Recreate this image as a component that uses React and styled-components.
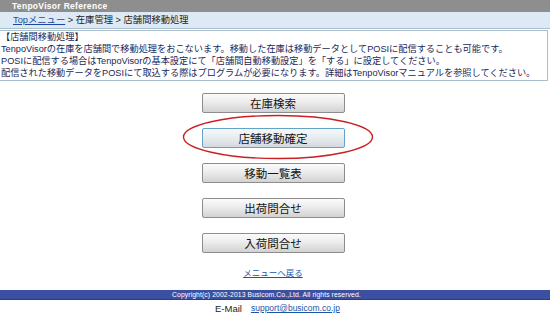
import React from 'react';
import styled, { createGlobalStyle, css } from 'styled-components';

const GlobalStyle = createGlobalStyle`
  body {
    margin: 0;
    background: #ffffff;
    font-family: "Liberation Sans", "Noto Sans CJK JP", sans-serif;
  }
`;

const Page = styled.div`
  width: 550px;
  height: 317px;
  overflow: hidden;
`;

const TitleBar = styled.div`
  height: 12px;
  line-height: 12px;
  padding-left: 12px;
  background: #8f8e8e;
  color: #ffffff;
  font-size: 8.5px;
  font-weight: 700;
  letter-spacing: 0.3px;
`;

const Crumbs = styled.div`
  height: 16px;
  line-height: 16px;
  padding-left: 13px;
  background: #dde9f4;
  border-bottom: 1px solid #a9bfcb;
  color: #1d1d1d;
  font-size: 9.3px;
`;

const CrumbLink = styled.a`
  color: #1b4a9c;
  text-decoration: underline;
`;

const Notice = styled.div`
  margin: 1px 2px 0 0;
  padding: 0 0 1px 1px;
  border: 1px solid #a9c0cc;
  border-left: none;
  color: #1a2858;
  font-size: 9.2px;
  line-height: 12px;
`;

const Menu = styled.div`
  display: flex;
  flex-direction: column;
  align-items: center;
  gap: 15px;
  margin-top: 12px;
  padding-right: 4px;
`;

const ButtonWrap = styled.div`
  position: relative;
`;

const MenuButton = styled.button`
  display: block;
  width: 143px;
  height: 20px;
  padding: 0;
  border: 1px solid #8d8d8d;
  border-radius: 2px;
  background: linear-gradient(#fbfbfb, #ececec 45%, #d2d2d2);
  color: #141414;
  font-family: "Noto Sans CJK JP", sans-serif;
  font-size: 11.5px;
  line-height: 18px;
  cursor: pointer;

  ${props =>
    props.active &&
    css`
      border-color: #64a2c8;
      background: linear-gradient(#f6f9fb, #e8edf0 45%, #d3dadf);
    `}
`;

const Ring = styled.svg`
  position: absolute;
  left: -20px;
  top: -14px;
  width: 192px;
  height: 46px;
  pointer-events: none;
`;

const BackLink = styled.a`
  display: block;
  margin-top: 15px;
  padding-right: 4px;
  text-align: center;
  color: #1b55a8;
  font-size: 8.5px;
  line-height: 10px;
  text-decoration: underline;
`;

const Footer = styled.div`
  margin-top: 12px;
  height: 9px;
  line-height: 9px;
  padding-left: 172px;
  background: #3c50a2;
  border-bottom: 1px solid #2c3b80;
  color: #ffffff;
  font-size: 6.8px;
  letter-spacing: 0.1px;
`;

const Contact = styled.div`
  display: flex;
  align-items: center;
  gap: 9px;
  height: 16px;
  padding-left: 215px;
  font-size: 9.5px;
  color: #1d1d1d;
`;

const MailLink = styled.a`
  color: #1b55a8;
  font-size: 8.5px;
  text-decoration: underline;
`;

const items = ['在庫検索', '店舗移動確定', '移動一覧表', '出荷問合せ', '入荷問合せ'];

export default function App() {
  return (
    <Page>
      <GlobalStyle />
      <TitleBar>TenpoVisor Reference</TitleBar>
      <Crumbs>
        <CrumbLink>Topメニュー</CrumbLink> &gt; 在庫管理 &gt; 店舗間移動処理
      </Crumbs>
      <Notice>
        <div>【店舗間移動処理】</div>
        <div>TenpoVisorの在庫を店舗間で移動処理をおこないます。移動した在庫は移動データとしてPOSIに配信することも可能です。</div>
        <div>POSIに配信する場合はTenpoVisorの基本設定にて「店舗間自動移動設定」を「する」に設定してください。</div>
        <div>配信された移動データをPOSIにて取込する際はプログラムが必要になります。詳細はTenpoVisorマニュアルを参照してください。</div>
      </Notice>
      <Menu>
        {items.map((label, i) => (
          <ButtonWrap key={label}>
            <MenuButton active={i === 1}>{label}</MenuButton>
            {i === 1 && (
              <Ring viewBox="0 0 192 46">
                <ellipse cx="96" cy="23" rx="94.5" ry="21.5" fill="none" stroke="#cc1f24" strokeWidth="1.4" />
              </Ring>
            )}
          </ButtonWrap>
        ))}
      </Menu>
      <BackLink>メニューへ戻る</BackLink>
      <Footer>Copyright(c) 2002-2013 Busicom.Co.,Ltd. All rights reserved.</Footer>
      <Contact>
        <span>E-Mail</span>
        <MailLink>support@busicom.co.jp</MailLink>
      </Contact>
    </Page>
  );
}
